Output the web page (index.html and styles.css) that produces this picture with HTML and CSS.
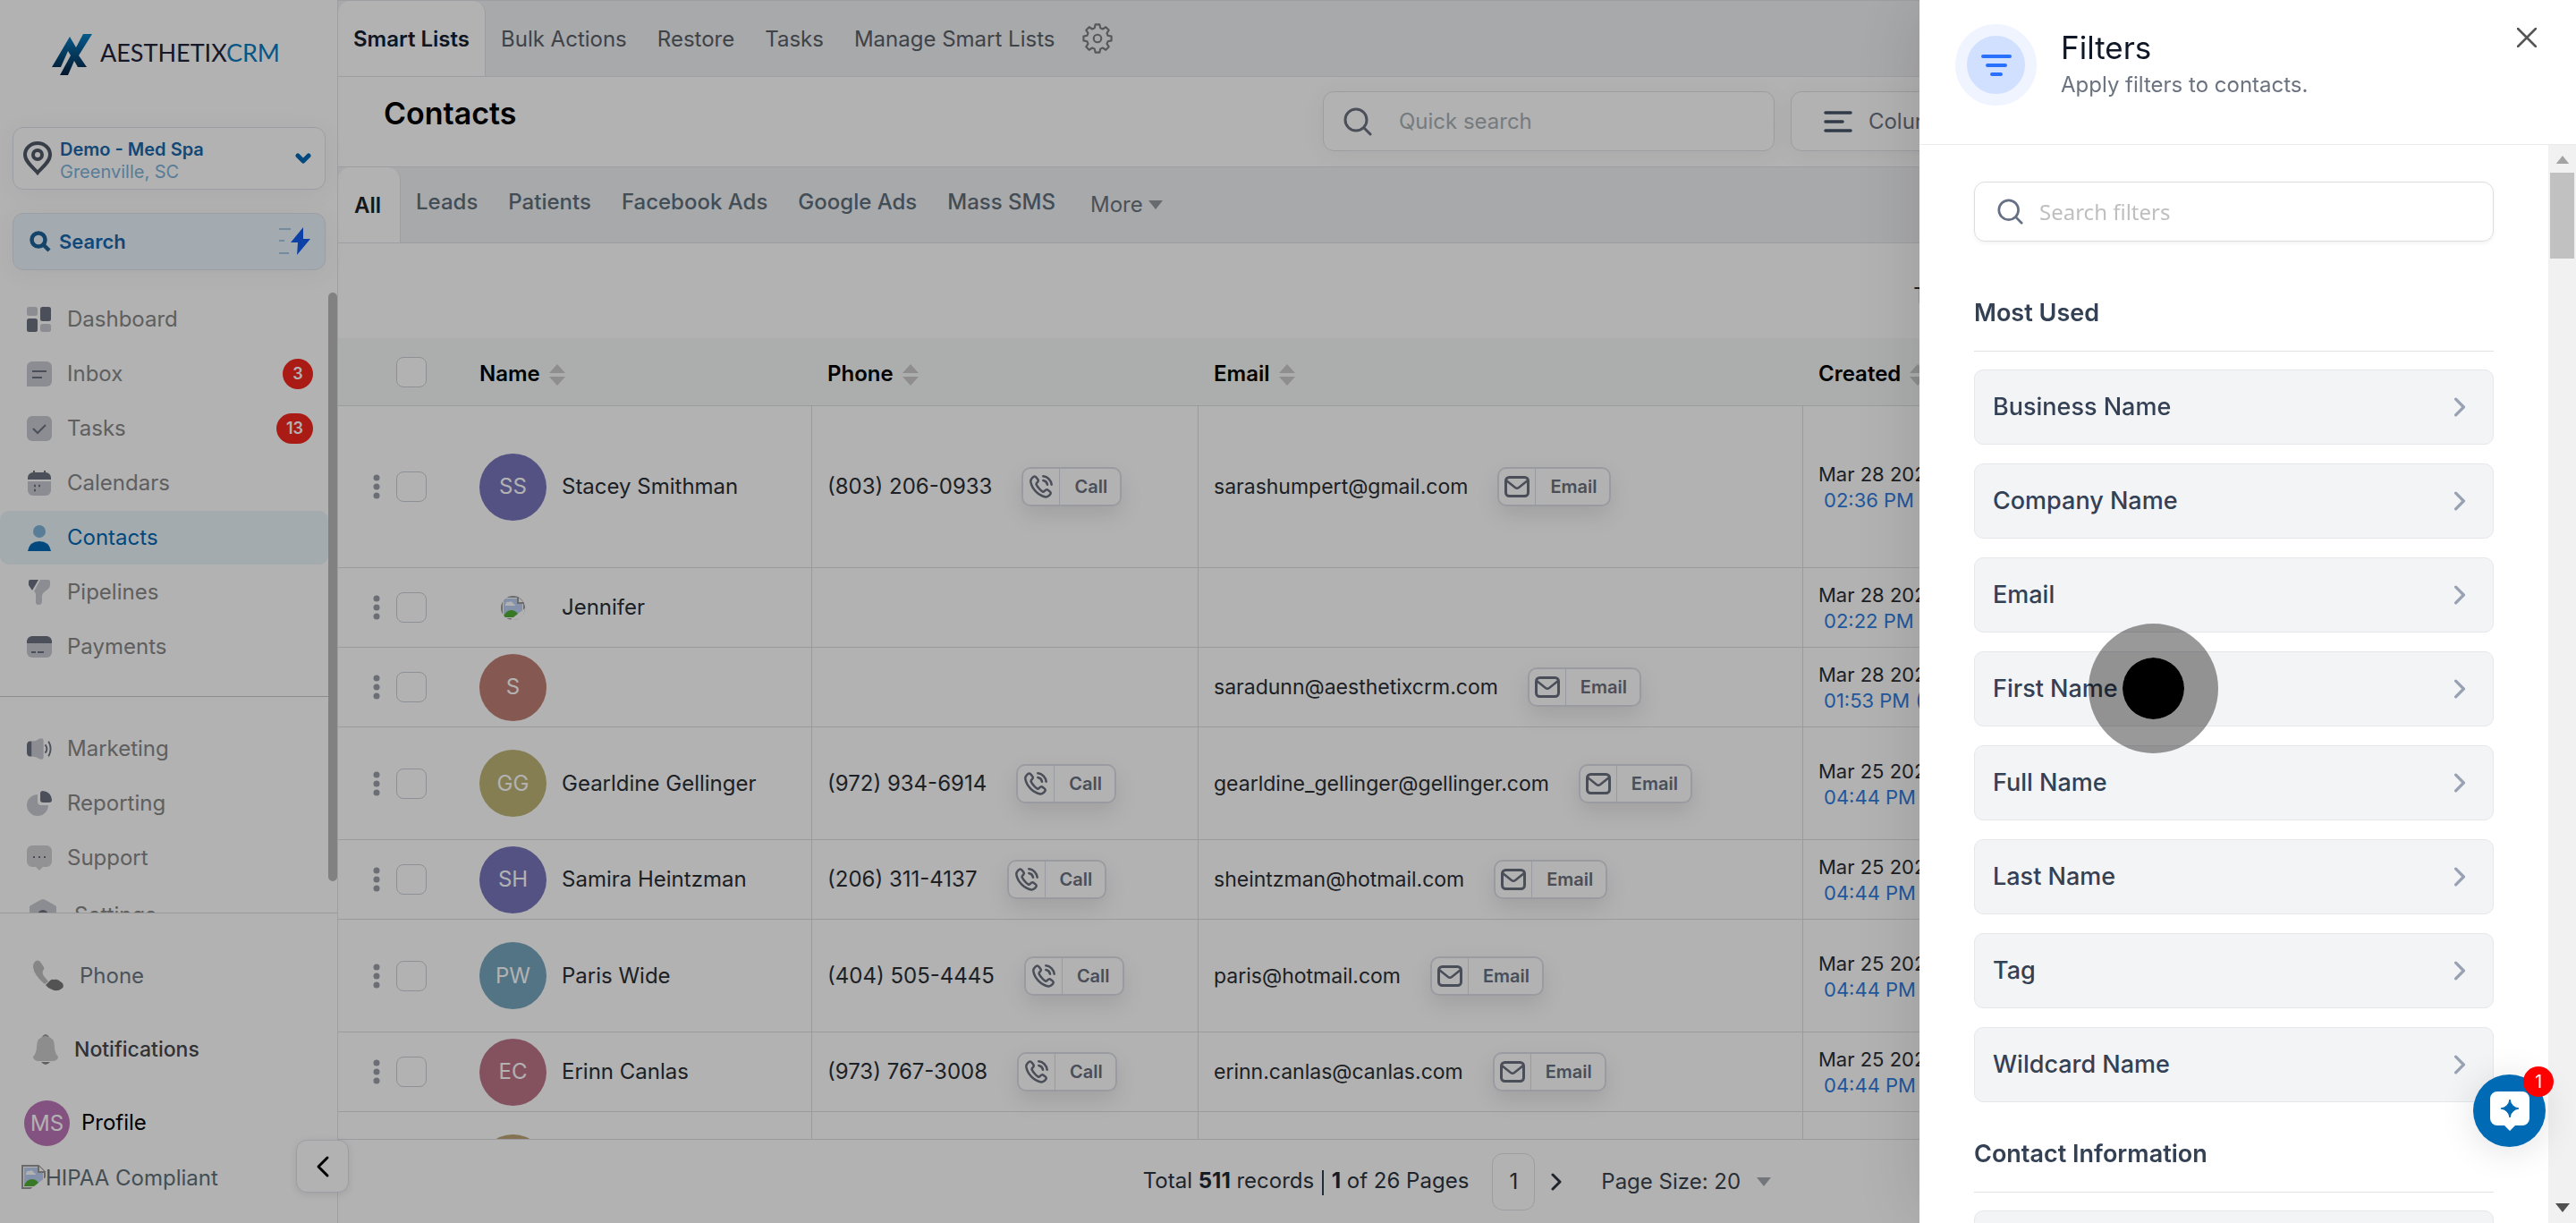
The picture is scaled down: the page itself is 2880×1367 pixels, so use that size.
FILE: index.html
```
<!DOCTYPE html>
<html lang="en">
<head>
    <meta charset="utf-8">
    <title>Contacts</title>
    <link rel="stylesheet" href="styles.css">
</head>
<body>
    <!-- shared icons -->
    <svg class="sprite" width="0" height="0">
        <symbol id="search" viewBox="0 0 32 32"><circle cx="14" cy="14" r="12" fill="none" stroke="currentColor" stroke-width="3"/><path d="M23 23l7 7" stroke="currentColor" stroke-width="3" stroke-linecap="round"/></symbol>
        <symbol id="dots" viewBox="0 0 8 28"><circle cx="4" cy="4" r="3.5"/><circle cx="4" cy="14" r="3.5"/><circle cx="4" cy="24" r="3.5"/></symbol>
        <symbol id="sort" viewBox="0 0 18 24"><path d="M9 0l9 10H0zM0 14h18L9 24z"/></symbol>
        <symbol id="call" viewBox="0 0 24 24"><path d="M14 6a5 5 0 0 1 4 4M14 2a9 9 0 0 1 8 8M10.200 13.900a14.600 14.600 0 0 1-2.800-4c-.1-.2-.1-.5 0-.8.1-.4.3-.6.6-.9.9-.9 1.300-1.300 1.300-2.200 0-.5-.5-1-1.400-2.200C7 2.800 6.400 2.200 5.700 2.200c-.9 0-1.500.6-2.200 1.300C2.300 4.700 1.800 5.600 2 7.200c.5 3.200 2 6.400 4.900 9.400 3 3 6.300 4.700 9.500 5.200 1.500.2 2.400-.4 3.500-1.500.8-.8 1.300-1.400 1.300-2.200 0-.7-.5-1.300-1.500-2-1.100-.8-1.700-1.300-2.300-1.300-.8 0-1.300.5-2.200 1.400-.3.3-.5.5-.8.6-.3.1-.6.1-.8 0a14 14 0 0 1-3.400-2.900z" fill="none" stroke="currentColor" stroke-width="2.200" stroke-linejoin="round" stroke-linecap="round"/></symbol>
        <symbol id="mail" viewBox="0 0 28 24"><rect x="1.500" y="1.500" width="25" height="21" rx="4" fill="none" stroke="currentColor" stroke-width="3"/><path d="M2 5l10 8q2 1.500 4 0l10-8" fill="none" stroke="currentColor" stroke-width="2.500"/></symbol>
        <symbol id="right" viewBox="0 0 12 20"><path d="M2 2l8 8-8 8" fill="none" stroke="currentColor" stroke-width="3" stroke-linecap="round" stroke-linejoin="round"/></symbol>
        <symbol id="caret" viewBox="0 0 16 10"><path d="M0 0h16L8 10z" fill="currentColor"/></symbol>
        <symbol id="broken" viewBox="0 0 27 27"><path d="M1 1h18l7 7v18H1z" fill="#fff" stroke="#999" stroke-width="2"/><path d="M3 3h15v6h6v15H3z" fill="#bcd0f5"/><path d="M5 10q1-4 4-3 3-2 5 2 2 0 2 2H5z" fill="#fff"/><path d="M3 24q2-8 9-8 6 0 9 8z" fill="#4fae35"/><path d="M27 14L10 27h17z" fill="#fff"/><path d="M19 1v7h7" fill="#fff" stroke="#999" stroke-width="2"/></symbol>
    </svg>

    <aside class="sidebar">
        <a class="logo" href="#">
            <svg width="46" height="48" viewBox="0 0 46 48">
                <defs><linearGradient id="lg" x1="0" y1="0" x2="0" y2="1"><stop offset="0" stop-color="#0a82c8"/><stop offset="1" stop-color="#05213f"/></linearGradient></defs>
                <path d="M0 38L20 4l7 12L35 1h10L30 25l9 13H29l-4-7L18 47H9l12-22-3-5L10 38z" fill="url(#lg)"/>
            </svg>
            <span>AESTHETIX<b>CRM</b></span>
        </a>
        <button class="location">
            <svg width="32" height="38" viewBox="0 0 32 38" fill="none" stroke="#515a68" stroke-width="4"><path d="M16 35C12 30 2 23 2 15a14 13 0 0 1 28 0c0 8-10 15-14 20z"/><circle cx="16" cy="15" r="5"/></svg>
            <span class="location-text"><b>Demo - Med Spa</b><span>Greenville, SC</span></span>
            <svg width="18" height="12" viewBox="0 0 18 12"><path d="M3 3l6 6 6-6" fill="none" stroke="#0068b3" stroke-width="5" stroke-linecap="round" stroke-linejoin="round"/></svg>
        </button>
        <button class="side-search">
            <svg width="24" height="24" viewBox="0 0 24 24" fill="none" stroke="#1f6298" stroke-width="4.500"><circle cx="10" cy="10" r="7.500"/><path d="M15 15l7 7"/></svg>
            <b>Search</b>
            <svg width="36" height="32" viewBox="0 0 36 32"><path d="M0 2h13M0 15h6M0 29h11" stroke="#8fb9dc" stroke-width="1.500"/><path d="M27 0L13 17h8l-1 14 15-18h-8z" fill="#155eef"/></svg>
        </button>

        <div class="nav-area">
            <nav class="nav">
                <a href="#"><svg width="28" height="28" viewBox="0 0 28 28"><rect width="12" height="10" rx="2.500" fill="#c9cbd1"/><rect x="15" width="12" height="16" rx="2.500" fill="#6b7280"/><rect y="13" width="12" height="15" rx="2.500" fill="#6b7280"/><rect x="15" y="19" width="12" height="9" rx="2.500" fill="#c9cbd1"/></svg>Dashboard</a>
                <a href="#"><svg width="28" height="28" viewBox="0 0 28 28"><path d="M6 0h16a6 6 0 0 1 6 6v16a6 6 0 0 1-6 6H0V6a6 6 0 0 1 6-6z" fill="#c9cbd1"/><path d="M6 11h16M6 18h11" stroke="#6b7280" stroke-width="2"/></svg>Inbox<span class="count">3</span></a>
                <a href="#"><svg width="28" height="28" viewBox="0 0 28 28"><rect width="28" height="28" rx="6" fill="#c9cbd1"/><path d="M7 14l5 5 9-9" stroke="#6b7280" stroke-width="2" fill="none"/></svg>Tasks<span class="count">13</span></a>
                <a href="#"><svg width="28" height="30" viewBox="0 0 28 30"><path d="M8 1v5M20 1v5" stroke="#6b7280" stroke-width="2"/><path d="M1 11V9a6 6 0 0 1 6-6h14a6 6 0 0 1 6 6v2z" fill="#6b7280"/><path d="M1 13h26v10a6 6 0 0 1-6 6H7a6 6 0 0 1-6-6z" fill="#c9cbd1"/><path d="M8 18h2M13 18h2M8 23h2" stroke="#6b7280" stroke-width="2.500"/></svg>Calendars</a>
                <a href="#" class="active"><svg width="28" height="30" viewBox="0 0 28 30"><circle cx="14" cy="8" r="7" fill="#80b4d8"/><path d="M1 30q2-11 13-11t13 11z" fill="#0068b3"/></svg>Contacts</a>
                <a href="#"><svg width="28" height="28" viewBox="0 0 28 28"><path d="M4 0h9L6 12 2 6V2q0-2 2-2z" fill="#6b7280"/><path d="M15 0h9q2 0 2 2v4q0 3-3 5-6 4-6 7v6q0 4-4 4-3 0-3-3v-8q0-3-2-4z" fill="#c9cbd1"/></svg>Pipelines</a>
                <a href="#"><svg width="28" height="24" viewBox="0 0 28 24"><path d="M0 8V6a6 6 0 0 1 6-6h16a6 6 0 0 1 6 6v2z" fill="#6b7280"/><path d="M0 8h28v10a6 6 0 0 1-6 6H6a6 6 0 0 1-6-6z" fill="#c9cbd1"/><path d="M5 18h5M12 18h7" stroke="#6b7280" stroke-width="2"/></svg>Payments</a>
                <hr>
                <a href="#"><svg width="30" height="26" viewBox="0 0 30 26"><path d="M6 4v18H4q-4 0-4-5V9q0-5 4-5z" fill="#6b7280"/><path d="M6 4q5 0 9-3 5-2 5 3v18q0 5-5 3-4-3-9-3z" fill="#c9cbd1"/><path d="M22 8q4 5 0 10M26 4q5 9 0 18" fill="none" stroke="#6b7280" stroke-width="2"/></svg>Marketing</a>
                <a href="#"><svg width="28" height="28" viewBox="0 0 28 28"><path d="M12 4v8q0 4 4 4h8A12 12 0 1 1 12 4z" fill="#c9cbd1"/><path d="M15 3q0-3 3-3 9 1 10 10 0 3-3 3h-7q-3 0-3-3z" fill="#6b7280"/></svg>Reporting</a>
                <a href="#"><svg width="28" height="28" viewBox="0 0 28 28"><path d="M6 0h16a6 6 0 0 1 6 6v12a6 6 0 0 1-6 6h-4l-4 4-4-4H6a6 6 0 0 1-6-6V6a6 6 0 0 1 6-6z" fill="#d2d2d4"/><path d="M7 13h2M13 13h2M19 13h2" stroke="#6b7280" stroke-width="2"/></svg>Support</a>
                <a href="#" class="settings"><svg width="32" height="36" viewBox="0 0 32 36"><path d="M16 0q2 0 15 8v20L16 36 1 28V8Q14 0 16 0z" fill="#c9cbd1"/><circle cx="16" cy="18" r="6" fill="#6b7280"/></svg>Settings</a>
            </nav>
            <div class="nav-scroll"></div>
        </div>

        <div class="side-bottom">
            <a href="#" class="phone"><svg width="36" height="36" viewBox="0 0 36 36"><path d="M3 2q3-3 6 0l4 6q1 2-1 4-1 3 1 6l5 6-4 3Q2 17 1 8q0-4 2-6z" fill="#c0c0c0"/><path d="M15 28l5-5q2-2 4-1 3-1 6 1l4 3q2 4-1 6-5 4-11 1-5-2-7-5z" fill="#777"/></svg>Phone</a>
            <a href="#" class="notif"><svg width="28" height="36" viewBox="0 0 28 36"><path d="M10 4q4-6 8 0z" fill="#999"/><path d="M14 3q10 1 10 12 0 7 4 11 0 4-5 5H5q-5-1-5-5 4-4 4-11Q4 4 14 3z" fill="#cbcbcb"/><path d="M9 32h10q-5 6-10 0z" fill="#8a8a8a"/></svg>Notifications</a>
            <a href="#" class="profile"><span class="me">MS</span>Profile</a>
            <div class="hipaa"><svg width="27" height="27"><use href="#broken"/></svg>HIPAA Compliant</div>
        </div>
        <button class="collapse" aria-label="Collapse sidebar"><svg width="16" height="26" viewBox="0 0 16 26"><path d="M13 3L3 13l10 10" fill="none" stroke="#000" stroke-width="3" stroke-linecap="round" stroke-linejoin="round"/></svg></button>
    </aside>

    <main class="main">
        <nav class="tabs">
            <a href="#" class="on">Smart Lists</a>
            <a href="#">Bulk Actions</a>
            <a href="#">Restore</a>
            <a href="#">Tasks</a>
            <a href="#">Manage Smart Lists</a>
            <button class="gear" aria-label="Settings"><svg width="34" height="34" viewBox="0 0 24 24" fill="none" stroke="#7b7f84" stroke-width="1.500" stroke-linejoin="round"><circle cx="12" cy="12" r="3"/><path d="M10.300 2h3.400l.6 2.800 1.800.8 2.500-1.600 2.400 2.400-1.600 2.500.8 1.800 2.800.6v3.400l-2.800.6-.8 1.800 1.600 2.500-2.400 2.400-2.500-1.600-1.800.8-.6 2.800h-3.400l-.6-2.800-1.800-.8-2.500 1.600L3 19.600l1.600-2.500-.8-1.800L1 14.700v-3.400l2.800-.6.8-1.800L3 6.400 5.400 4l2.500 1.600 1.800-.8z" transform="translate(0 -1)"/></svg></button>
        </nav>
        <header class="page-head">
            <h1>Contacts</h1>
            <div class="tools">
                <label class="quick"><svg width="32" height="32"><use href="#search"/></svg><input type="text" placeholder="Quick search" aria-label="Quick search"></label>
                <button class="columns"><svg width="32" height="24" viewBox="0 0 32 24"><path d="M2 2h28M2 12h19M2 22h28" stroke="#475467" stroke-width="3.500" stroke-linecap="round"/></svg>Columns</button>
            </div>
        </header>
        <nav class="tabs lists">
            <a href="#" class="on">All</a>
            <a href="#">Leads</a>
            <a href="#">Patients</a>
            <a href="#">Facebook Ads</a>
            <a href="#">Google Ads</a>
            <a href="#">Mass SMS</a>
            <button class="more">More <svg width="16" height="10"><use href="#caret"/></svg></button>
        </nav>
        <div class="pager top">
            <span>Total <b>511</b> records <i></i> <b>1</b> of 26 Pages</span>
        </div>
        <div class="table-wrap">
            <table>
                <colgroup><col class="c-pick"><col class="c-name"><col class="c-phone"><col class="c-email"><col></colgroup>
                <thead>
                    <tr>
                        <th><div class="pick"><input type="checkbox" aria-label="Select all"></div></th>
                        <th>Name <svg width="18" height="24"><use href="#sort"/></svg></th>
                        <th>Phone <svg width="18" height="24"><use href="#sort"/></svg></th>
                        <th>Email <svg width="18" height="24"><use href="#sort"/></svg></th>
                        <th>Created <svg width="18" height="24"><use href="#sort"/></svg></th>
                    </tr>
                </thead>
                <tbody>
                    <tr class="tall">
                        <td><div class="pick"><button aria-label="Row menu"><svg width="8" height="28"><use href="#dots"/></svg></button><input type="checkbox" aria-label="Select Stacey Smithman"></div></td>
                        <td><div class="cell"><span class="avatar violet">SS</span>Stacey Smithman</div></td>
                        <td><div class="cell">(803) 206-0933<button class="act"><svg width="28" height="28"><use href="#call"/></svg><span>Call</span></button></div></td>
                        <td><div class="cell mailto">sarashumpert@gmail.com<button class="act"><svg width="28" height="24"><use href="#mail"/></svg><span>Email</span></button></div></td>
                        <td class="date">Mar 28 2024<a href="#">02:36 PM</a></td>
                    </tr>
                    <tr>
                        <td><div class="pick"><button aria-label="Row menu"><svg width="8" height="28"><use href="#dots"/></svg></button><input type="checkbox" aria-label="Select Jennifer"></div></td>
                        <td><div class="cell"><span class="avatar"><svg width="27" height="27"><use href="#broken"/></svg></span>Jennifer</div></td>
                        <td></td>
                        <td></td>
                        <td class="date">Mar 28 2024<a href="#">02:22 PM</a></td>
                    </tr>
                    <tr>
                        <td><div class="pick"><button aria-label="Row menu"><svg width="8" height="28"><use href="#dots"/></svg></button><input type="checkbox" aria-label="Select S"></div></td>
                        <td><div class="cell"><span class="avatar brick">S</span></div></td>
                        <td></td>
                        <td><div class="cell mailto">saradunn@aesthetixcrm.com<button class="act"><svg width="28" height="24"><use href="#mail"/></svg><span>Email</span></button></div></td>
                        <td class="date">Mar 28 2024<a href="#">01:53 PM (EDT)</a></td>
                    </tr>
                    <tr class="mid">
                        <td><div class="pick"><button aria-label="Row menu"><svg width="8" height="28"><use href="#dots"/></svg></button><input type="checkbox" aria-label="Select Gearldine Gellinger"></div></td>
                        <td><div class="cell"><span class="avatar olive">GG</span>Gearldine Gellinger</div></td>
                        <td><div class="cell">(972) 934-6914<button class="act"><svg width="28" height="28"><use href="#call"/></svg><span>Call</span></button></div></td>
                        <td><div class="cell mailto">gearldine_gellinger@gellinger.com<button class="act"><svg width="28" height="24"><use href="#mail"/></svg><span>Email</span></button></div></td>
                        <td class="date">Mar 25 2024<a href="#">04:44 PM</a></td>
                    </tr>
                    <tr>
                        <td><div class="pick"><button aria-label="Row menu"><svg width="8" height="28"><use href="#dots"/></svg></button><input type="checkbox" aria-label="Select Samira Heintzman"></div></td>
                        <td><div class="cell"><span class="avatar violet">SH</span>Samira Heintzman</div></td>
                        <td><div class="cell">(206) 311-4137<button class="act"><svg width="28" height="28"><use href="#call"/></svg><span>Call</span></button></div></td>
                        <td><div class="cell mailto">sheintzman@hotmail.com<button class="act"><svg width="28" height="24"><use href="#mail"/></svg><span>Email</span></button></div></td>
                        <td class="date">Mar 25 2024<a href="#">04:44 PM</a></td>
                    </tr>
                    <tr class="mid">
                        <td><div class="pick"><button aria-label="Row menu"><svg width="8" height="28"><use href="#dots"/></svg></button><input type="checkbox" aria-label="Select Paris Wide"></div></td>
                        <td><div class="cell"><span class="avatar teal">PW</span>Paris Wide</div></td>
                        <td><div class="cell">(404) 505-4445<button class="act"><svg width="28" height="28"><use href="#call"/></svg><span>Call</span></button></div></td>
                        <td><div class="cell mailto">paris@hotmail.com<button class="act"><svg width="28" height="24"><use href="#mail"/></svg><span>Email</span></button></div></td>
                        <td class="date">Mar 25 2024<a href="#">04:44 PM</a></td>
                    </tr>
                    <tr>
                        <td><div class="pick"><button aria-label="Row menu"><svg width="8" height="28"><use href="#dots"/></svg></button><input type="checkbox" aria-label="Select Erinn Canlas"></div></td>
                        <td><div class="cell"><span class="avatar rose">EC</span>Erinn Canlas</div></td>
                        <td><div class="cell">(973) 767-3008<button class="act"><svg width="28" height="28"><use href="#call"/></svg><span>Call</span></button></div></td>
                        <td><div class="cell mailto">erinn.canlas@canlas.com<button class="act"><svg width="28" height="24"><use href="#mail"/></svg><span>Email</span></button></div></td>
                        <td class="date">Mar 25 2024<a href="#">04:44 PM</a></td>
                    </tr>
                    <tr class="mid">
                        <td></td>
                        <td><div class="cell"><span class="avatar sand"></span></div></td>
                        <td></td>
                        <td></td>
                        <td></td>
                    </tr>
                </tbody>
            </table>
        </div>
        <footer class="pager bottom">
            <span>Total <b>511</b> records <i></i> <b>1</b> of 26 Pages</span>
            <button class="page">1</button>
            <button class="next" aria-label="Next page"><svg width="12" height="20"><use href="#right"/></svg></button>
            <label class="size"><select aria-label="Page size"><option>Page Size: 20</option></select><svg width="16" height="10"><use href="#caret"/></svg></label>
        </footer>
    </main>

    <div class="overlay"></div>

    <section class="drawer">
        <header class="drawer-head">
            <span class="filter-icon"><svg width="34" height="26" viewBox="0 0 34 26"><path d="M2 3h30M7 13h20M12 23h10" stroke="#2970ff" stroke-width="4" stroke-linecap="round"/></svg></span>
            <div>
                <h2>Filters</h2>
                <p>Apply filters to contacts.</p>
            </div>
            <button class="close" aria-label="Close"><svg width="22" height="22" viewBox="0 0 22 22"><path d="M1 1l20 20M21 1L1 21" stroke="#555" stroke-width="2.500" stroke-linecap="round"/></svg></button>
        </header>
        <div class="drawer-body">
            <div class="filters">
                <label class="filter-search"><svg width="29" height="29"><use href="#search"/></svg><input type="text" placeholder="Search filters" aria-label="Search filters"></label>
                <h3>Most Used</h3>
                <button>Business Name<svg width="14" height="22"><use href="#right"/></svg></button>
                <button>Company Name<svg width="14" height="22"><use href="#right"/></svg></button>
                <button>Email<svg width="14" height="22"><use href="#right"/></svg></button>
                <button>First Name<svg width="14" height="22"><use href="#right"/></svg></button>
                <button>Full Name<svg width="14" height="22"><use href="#right"/></svg></button>
                <button>Last Name<svg width="14" height="22"><use href="#right"/></svg></button>
                <button>Tag<svg width="14" height="22"><use href="#right"/></svg></button>
                <button>Wildcard Name<svg width="14" height="22"><use href="#right"/></svg></button>
                <h3>Contact Information</h3>
                <button></button>
            </div>
            <div class="scrollbar">
                <svg class="up" width="16" height="9"><use href="#caret"/></svg>
                <div class="thumb"></div>
                <svg class="down" width="16" height="10"><use href="#caret"/></svg>
            </div>
        </div>
    </section>

    <button class="chat" aria-label="Open chat">
        <svg width="44" height="44" viewBox="0 0 44 44"><path d="M8 0h28a8 8 0 0 1 8 8v22a8 8 0 0 1-8 8h-8l-6 6-6-6H8a8 8 0 0 1-8-8V8a8 8 0 0 1 8-8z" fill="#fff"/><path d="M22 9q1.500 8.500 10 10-8.500 1.500-10 10-1.500-8.500-10-10 8.500-1.500 10-10z" fill="#006ab5" stroke="#006ab5"/></svg>
        <span>1</span>
    </button>
    <div class="pointer"></div>
</body>
</html>
```
FILE: styles.css
```
* {
    box-sizing: border-box;
}
body {
    margin: 0;
    height: 100vh;
    display: flex;
    overflow: hidden;
    background: #fff;
    color: #2a2e34;
    font-family: Inter, sans-serif;
    font-size: 24px;
    line-height: 30px;
}
a {
    color: inherit;
    text-decoration: none;
}
button, input, select {
    font: inherit;
    color: inherit;
    background: none;
    border: 0;
    padding: 0;
    margin: 0;
}
svg {
    flex: none;
    display: block;
}
.sprite {
    position: absolute;
}

/* sidebar */
.sidebar {
    position: relative;
    flex: none;
    width: 378px;
    display: flex;
    flex-direction: column;
    border-right: 1px solid #e4e6ee;
}
.logo {
    display: flex;
    align-items: center;
    gap: 8px;
    height: 86px;
    margin: 18px 0 38px 58px;
    font-family: Lato, sans-serif;
    color: #23233a;
}
.logo span {
    font-size: 27px;
    padding-bottom: 4px;
}
.logo b {
    font-weight: 400;
    color: #0a7cc0;
}
.location, .side-search {
    display: flex;
    align-items: center;
    margin: 0 13px 0 14px;
    border: 1px solid #dfe2ea;
    border-radius: 12px;
    text-align: left;
    box-shadow: 0 4px 28px rgba(0, 0, 0, 0.05);
}
.location {
    height: 70px;
    padding: 0 15px 0 11px;
    gap: 9px;
}
.location-text {
    flex: 1;
    padding-top: 6px;
    font-size: 20px;
    line-height: 25px;
    color: #7fb3d9;
}
.location-text b {
    display: block;
    font-weight: 600;
    color: #1b68ab;
}
.side-search {
    height: 64px;
    margin-top: 26px;
    padding: 0 15px 0 18px;
    gap: 9px;
    background: #ebf5fc;
}
.side-search b {
    flex: 1;
    font-size: 22px;
    font-weight: 600;
    color: #1b68ab;
}
.nav-area {
    flex: 1;
    min-height: 0;
    margin-top: 25px;
    display: flex;
}
.nav {
    flex: 1;
    overflow: hidden;
    color: #888;
}
.nav a {
    display: flex;
    align-items: center;
    height: 60px;
    margin-bottom: 1px;
    padding: 0 17px 0 30px;
    gap: 17px;
    border-radius: 10px;
}
.nav svg {
    width: 28px;
}
.nav a.active {
    background: #ebf5fb;
    color: #0068b3;
}
.nav hr {
    border: 0;
    border-top: 1px solid #c9c9c9;
    margin: 25px 0 28px;
}
.nav a.settings {
    height: 66px;
    gap: 19px;
    padding-left: 32px;
}
.nav .settings svg {
    width: 32px;
}
.count {
    margin-left: auto;
    min-width: 34px;
    padding: 0 11px;
    border-radius: 17px;
    background: #f3281e;
    color: #fff;
    font-size: 18px;
    font-weight: 600;
    line-height: 34px;
    text-align: center;
}
.nav-scroll {
    width: 10px;
    height: 95%;
    border-radius: 5px;
    background: #b9b9b9;
}
.side-bottom {
    border-top: 1px solid #dcdcdc;
    padding: 29px 0 35px;
}
.side-bottom a {
    display: flex;
    align-items: center;
    height: 82px;
}
.side-bottom .phone {
    padding-left: 36px;
    gap: 17px;
    color: #6b7785;
}
.side-bottom .notif {
    padding-left: 37px;
    gap: 18px;
    font-size: 23px;
    font-weight: 500;
    color: #45484c;
}
.side-bottom .profile {
    padding-left: 27px;
    gap: 13px;
    color: #000;
}
.me {
    width: 51px;
    border-radius: 50%;
    background: #be76b8;
    color: #fff;
    line-height: 51px;
    text-align: center;
}
.hipaa {
    display: flex;
    padding: 6px 0 0 24px;
    color: #607179;
}
.collapse {
    position: absolute;
    right: -13px;
    bottom: 34px;
    width: 59px;
    height: 59px;
    display: flex;
    align-items: center;
    justify-content: center;
    border: 1px solid #dfe2ea;
    border-radius: 12px;
    background: #fff;
    box-shadow: 0 2px 8px rgba(0, 0, 0, 0.1);
}

/* main column */
.main {
    flex: 1;
    min-width: 0;
    display: flex;
    flex-direction: column;
}
.tabs {
    flex: none;
    display: flex;
    height: 86px;
    background: #f1f2f5;
    border-top: 1px solid #e2e3e8;
    border-bottom: 1px solid #e2e3e8;
    color: #5a6068;
}
.tabs a {
    padding: 0 17px;
    line-height: 86px;
}
.tabs a.on {
    height: 84px;
    border-right: 1px solid #e2e3e8;
    border-radius: 14px 14px 0 0;
    background: #fff;
    color: #15202e;
    font-weight: 600;
}
.gear {
    margin-left: 14px;
}
.lists a {
    font-weight: 500;
    color: #5f6f7b;
    line-height: 78px;
}
.lists a.on {
    padding: 0 21px 0 18px;
    line-height: 86px;
    color: #1f2328;
}
.more {
    display: flex;
    align-items: center;
    gap: 6px;
    margin-left: 22px;
    color: #6a747d;
}
.more svg {
    color: #949aa0;
}
.page-head {
    flex: none;
    display: flex;
    height: 100px;
}
h1 {
    flex: 1;
    margin: 0;
    padding-left: 51px;
    font-size: 34px;
    font-weight: 600;
    line-height: 82px;
    color: #000;
}
.tools {
    width: 56%;
    display: flex;
    gap: 18px;
    padding: 16px 0 0;
}
.quick, .columns {
    display: flex;
    align-items: center;
    height: 67px;
    border: 1px solid #dfe1e5;
    border-radius: 12px;
    box-shadow: 0 4px 28px rgba(0, 0, 0, 0.05);
}
.quick {
    width: 505px;
    padding: 0 22px;
    gap: 30px;
    color: #6b7280;
}
.quick input {
    flex: 1;
    min-width: 0;
    outline: 0;
}
.quick input::placeholder {
    color: #aab0b5;
}
.columns {
    padding: 0 36px;
    gap: 18px;
    color: #6b7280;
}
.pager {
    flex: none;
    display: flex;
    align-items: center;
    color: #2b3440;
}
.pager b {
    font-weight: 700;
    color: #1c2733;
}
.pager i {
    display: inline-block;
    width: 2px;
    height: 28px;
    margin: 0 2px;
    background: #2b3f55;
    vertical-align: middle;
}
.pager.top {
    height: 106px;
    justify-content: flex-end;
    padding-right: 376px;
    padding-top: 12px;
}
.pager.bottom {
    height: 94px;
    justify-content: center;
    border-top: 1px solid #dcdfe4;
}
.page {
    width: 48px;
    height: 64px;
    margin: 0 18px 0 26px;
    border: 1px solid #dfe1e5;
    border-radius: 12px;
}
.size {
    display: flex;
    align-items: center;
    margin-left: 44px;
    gap: 18px;
    color: #a5abb0;
}
.size select {
    appearance: none;
    color: #3c444e;
}

/* contacts table */
.table-wrap {
    flex: 1;
    min-height: 0;
    overflow: hidden;
}
table {
    width: 100%;
    table-layout: fixed;
    border-collapse: separate;
    border-spacing: 0;
}
.c-pick {
    width: 141px;
}
.c-name {
    width: 389px;
}
.c-phone {
    width: 432px;
}
.c-email {
    width: 676px;
}
th {
    height: 76px;
    padding: 4px 17px 0;
    background: #f7faf9;
    border-bottom: 1px solid #dbe0e3;
    color: #000;
    font-weight: 600;
    text-align: left;
}
th:first-child {
    padding-top: 0;
}
th svg {
    display: inline-block;
    margin-left: 4px;
    vertical-align: -5px;
    fill: #cdcbcb;
}
td {
    height: 89px;
    padding: 0 17px;
    border-right: 1px solid #dbdfe2;
    border-bottom: 1px solid #dbdfe2;
}
td:first-child {
    border-right: 0;
}
.tall td {
    height: 181px;
}
.mid td {
    height: 126px;
}
td.date {
    font-size: 22px;
}
.date a {
    display: block;
    padding-left: 6px;
    line-height: 28px;
    color: #2f7de0;
}
.pick {
    display: flex;
    align-items: center;
    justify-content: flex-end;
    gap: 18px;
    padding-right: 25px;
    fill: #9aa0a8;
}
.pick input {
    appearance: none;
    width: 34px;
    height: 34px;
    border: 1px solid #cbcfd4;
    border-radius: 8px;
    background: #fff;
}
.cell {
    display: flex;
    align-items: center;
}
.mailto {
    font-size: 23px;
}
.avatar {
    display: flex;
    align-items: center;
    justify-content: center;
    width: 75px;
    height: 75px;
    margin-right: 17px;
    border-radius: 50%;
    color: #fff;
}
.avatar svg {
    border-radius: 50%;
}
.violet {
    background: #7876bc;
}
.brick {
    background: #bf8076;
}
.olive {
    background: #beb576;
}
.teal {
    background: #76a6be;
}
.rose {
    background: #be7689;
}
.sand {
    background: #bea476;
}
.act {
    display: flex;
    align-items: stretch;
    height: 44px;
    margin-left: 33px;
    border: 2px solid #dddfe6;
    border-radius: 10px;
    color: #6b7080;
    font-size: 20px;
    font-weight: 600;
    box-shadow: 0 10px 24px rgba(0, 0, 0, 0.1);
}
.act svg {
    align-self: center;
    margin: 0 6px;
}
.act span {
    padding: 0 14px 0 16px;
    border-left: 1px solid #dddfe6;
    line-height: 40px;
}

.overlay {
    position: fixed;
    inset: 0;
    background: rgba(0, 0, 0, 0.3);
}

/* filters drawer */
.drawer {
    position: fixed;
    top: 0;
    right: 0;
    bottom: 0;
    width: 734px;
    display: flex;
    flex-direction: column;
    background: #fff;
    box-shadow: 0 0 80px rgba(0, 0, 0, 0.14);
}
.drawer-head {
    display: flex;
    align-items: flex-start;
    height: 162px;
    padding: 27px 44px 0 40px;
    gap: 27px;
    border-bottom: 1px solid #ebebeb;
}
.filter-icon {
    display: flex;
    align-items: center;
    justify-content: center;
    width: 91px;
    height: 91px;
    border: 13px solid #eff4ff;
    border-radius: 50%;
    background: #d1e0ff;
}
h2 {
    margin: 2px 0 0;
    font-size: 35px;
    font-weight: 400;
    line-height: 48px;
    color: #101828;
}
.drawer-head p {
    margin: 3px 0 0;
    color: #6b7280;
}
.close {
    margin: 4px 0 0 auto;
}
.drawer-body {
    flex: 1;
    min-height: 0;
    display: flex;
}
.filters {
    flex: 1;
    display: flex;
    flex-direction: column;
    padding: 41px 61px 0;
    overflow: hidden;
    font-size: 27px;
    color: #344054;
}
.filter-search {
    flex: none;
    display: flex;
    align-items: center;
    height: 67px;
    padding: 0 25px;
    gap: 18px;
    border: 1px solid #dcdde0;
    border-radius: 12px;
    color: #667085;
    box-shadow: 0 2px 4px rgba(0, 0, 0, 0.05);
}
.filter-search input {
    flex: 1;
    outline: 0;
    font-family: "Noto Sans", sans-serif;
    font-size: 24px;
}
.filter-search input::placeholder {
    color: #bfbfbf;
}
h3 {
    flex: none;
    margin: 57px 0 20px;
    padding-bottom: 19px;
    border-bottom: 1px solid #e3e3e6;
    font-size: 27px;
    font-weight: 600;
    line-height: 46px;
}
.filters button + h3 {
    margin-top: 14px;
}
.filters button {
    flex: none;
    display: flex;
    align-items: center;
    justify-content: space-between;
    height: 84px;
    margin-bottom: 21px;
    padding: 0 30px 0 20px;
    border: 1px solid #e5e7eb;
    border-radius: 10px;
    background: #f3f4f6;
    font-weight: 500;
}
.filters button svg {
    color: #98a2b3;
}
.scrollbar {
    width: 31px;
    display: flex;
    flex-direction: column;
    align-items: center;
    padding: 12px 0;
    background: #f1f1f1;
}
.up {
    color: #a3a3a3;
    transform: rotate(180deg);
}
.thumb {
    width: 27px;
    height: 96px;
    margin-top: 10px;
    background: #c1c1c1;
}
.down {
    margin-top: auto;
    color: #505050;
}

.chat {
    position: fixed;
    right: 34px;
    bottom: 85px;
    width: 81px;
    height: 81px;
    display: flex;
    align-items: center;
    justify-content: center;
    border-radius: 50%;
    background: #006ab5;
    box-shadow: 0 4px 40px rgba(0, 0, 0, 0.12);
}
.chat span {
    position: absolute;
    top: -9px;
    right: -9px;
    width: 34px;
    border-radius: 50%;
    background: #f00;
    color: #fff;
    font-size: 20px;
    line-height: 34px;
}
/* click marker */
.pointer {
    position: fixed;
    right: 400px;
    top: 697px;
    width: 145px;
    height: 145px;
    border: 38px solid rgba(0, 0, 0, 0.4);
    border-radius: 50%;
    background: #000;
    background-clip: padding-box;
}
```
